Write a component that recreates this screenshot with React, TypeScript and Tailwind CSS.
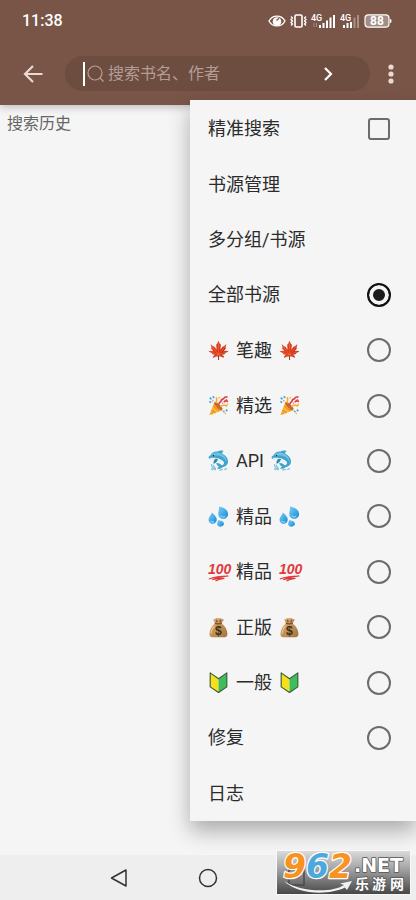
import { useState } from "react";
import type { ReactNode } from "react";

function Maple() {
  return (
    <svg viewBox="0 0 24 24" className="size-[21px]" aria-hidden="true">
      <defs>
        <linearGradient id="maple" x1="0" y1="0" x2="1" y2="1">
          <stop offset="0" stopColor="#ee5a30" />
          <stop offset=".5" stopColor="#d8361b" />
          <stop offset="1" stopColor="#b52d18" />
        </linearGradient>
      </defs>
      <path
        fill="url(#maple)"
        d="M12 .8l1.500 3.400 1.200 1-.5 5.800 2.300-3.200 1.700-.6 2.800-2.700-.9 3.900.2 1.600-2.500 2.800 3-.6 2.700.9-3.200 1.500-2 1.900-2.700.4 2.200 1.300.6 2.100-2.600-1-2.600-.7-.7.4.2 3.800h-1.200l-.1-3.800-.6-.4-2.700.7-2.700 1.200.8-2.300 2.100-1.300-2.600-.4-2-1.900L.5 13.100l2.700-.9 3 .6L3.700 10l.2-1.600L3 4.500l2.800 2.700 1.700.6L9.800 11l-.5-5.800 1.200-1z"
      />
      <path d="M12 4v13L4 6.500M12 17l8-10.500M12 17l-9-3.500M12 17l9-3.500M12 17l-4 2M12 17l4 2" stroke="#f58a4e" strokeWidth=".5" fill="none" />
      <path d="M12 17.500v5" stroke="#a33b17" strokeWidth="1" />
    </svg>
  );
}

function Party() {
  return (
    <svg viewBox="0 0 24 24" className="size-[21px]" aria-hidden="true">
      <path d="M1.500 23L7 8.500c3 .5 8.500 5.500 9.500 8.800z" fill="#f9b62c" />
      <path d="M4 17.500l4.500 3M6 12.500l7 5.500M3 20.500l2.500 1.300" stroke="#ec8a30" strokeWidth="1.400" />
      <ellipse cx="11.800" cy="12.700" rx="2.200" ry="6.200" transform="rotate(-46 11.800 12.700)" fill="#c96a2b" />
      <path d="M9 9c1-2 1.500-4 .5-6.500M14 13.500c2.500-2.500 4.500-2.500 8-1" fill="none" stroke="#f4a928" strokeWidth="1.800" />
      <path d="M12.500 11c-.5-3 2.500-2.500 2.500-4.500s3-1.500 3.300-3 2-1 4-1.500M18 8l3-2 1.500 2" fill="none" stroke="#e23d3d" strokeWidth="1.900" />
      <path d="M2 3l2 2M5.500 1.500L7 3.500M1.500 7.500l2.200 1M17 18.500l2 .6M20.500 16.500l1.500 2" stroke="#4ba6dc" strokeWidth="1.900" />
      <path d="M12 2.500l1.500 1M21.500 10l1 1.500M19 21.500l1.500-.8" stroke="#f7bd38" strokeWidth="1.900" />
      <path d="M5 6.200l1.200 1M16 9.700l1.300-.5" stroke="#ef7fa4" strokeWidth="1.700" />
    </svg>
  );
}

function Dolphin() {
  return (
    <svg viewBox="0 0 24 24" className="size-[21px]" aria-hidden="true">
      <path
        d="M.6 8.500c.2-1.300 1.300-1.600 2.100-2.200C4.200 2.800 7.500 1.500 11 1.800c1.800-1.200 4.200-1.500 7-.6-1.300.8-1.900 1.800-1.800 3 4.300 2 6.800 5.600 6.700 9.300-.1 3.200-2.300 5.500-6.400 6.100-1.500 1.600-3.600 2.300-6 1.600.3-1.100 1.200-1.700 2.200-2.100-1.800-.7-3-2-3.300-4.200 2.800-.1 4.700.7 6 2.600 2.300-.5 3.200-2 2.700-3.900-.8-1.800-3.300-2.300-6.100-2.500-3.500-.2-6.200.3-8.700-.5-1.300-.4-2.400-.8-2.700-2.100z"
        fill="#3fa3cc"
      />
      <path d="M3.500 6C6.500 1.800 13.500 2.200 17.300 5.800c3 2.700 4.300 5.500 3.700 8.200-1.700-5.500-7-8.700-14-7.400z" fill="#6fc4e4" />
      <path d="M1.800 8.800c3.500.3 6.700-.7 9.700.7 3.500 1.200 6.500 3.500 6.200 6-2-2.200-4.700-1.600-7.200-2.200-4 0-7-1-8.700-4.500z" fill="#e5f2f6" />
      <path d="M8.500 10c-1.800 1.300-2.500 3.300-2.200 5.800 2.500-.8 4.200-2.500 5.200-5.500z" fill="#2e89ae" />
      <circle cx="6.300" cy="6.400" r=".9" fill="#1d4050" />
      <path d="M4 16c0 4 2 6 5 6.700M6 17c.3 2 1.400 3.500 3 4.300M3.500 21.500l2 1.500M13 23l4-.8M18.500 22.500l3-1.500" stroke="#7cc3e2" strokeWidth="1.400" fill="none" />
    </svg>
  );
}

function Drops() {
  return (
    <svg viewBox="0 0 24 24" className="size-[21px]" aria-hidden="true">
      <defs>
        <linearGradient id="drop" x1="0" y1="0" x2="1" y2="1">
          <stop offset="0" stopColor="#79d0fa" />
          <stop offset="1" stopColor="#1588d0" />
        </linearGradient>
      </defs>
      <path d="M12.500.5c5.500.8 10.500 4 10.500 8.700 0 3.300-2.500 5.500-5.600 5.500-3.200 0-5.600-2.200-5.700-5.300-.1-3 1.300-5.700.8-8.900z" fill="url(#drop)" />
      <path d="M4.500 7.500c2.300 2.300 5.500 4.800 5.500 8.300 0 2.700-2 4.500-4.700 4.500S.6 18.500.6 15.800c0-3.200 3-5.200 3.900-8.300z" fill="url(#drop)" />
      <path d="M11.500 16c2.300.5 6.800 1.400 6.800 4.400 0 1.800-1.700 3.200-3.900 3.200s-4-1.200-4-3.400c0-1.600 1.400-2.500 1.100-4.200z" fill="url(#drop)" />
      <path d="M14.300 11.200c1.200 1.600 4 1.700 5.500.3M3 17.200c.9 1.400 2.800 1.600 4.200.6" stroke="#8adcff" strokeWidth="1.200" fill="none" />
    </svg>
  );
}

function Hundred() {
  return (
    <svg viewBox="0 0 21 21" className="size-[21px] overflow-visible" aria-hidden="true">
      <text x="0" y="13" fill="#e0393b" className="font-['Liberation_Sans_Narrow','Liberation_Sans'] text-[14px] font-bold italic">
        100
      </text>
      <path d="M.8 18C6 16 12 15 20 15c-5 .6-12 1.800-15.500 3.500 4-.8 7.500-1.300 11.500-1.200-3 .5-6.500 1.500-8.500 2.700" fill="none" stroke="#e0393b" strokeWidth="1.200" strokeLinejoin="round" />
    </svg>
  );
}

function MoneyBag() {
  return (
    <svg viewBox="0 0 24 24" className="size-[21px]" aria-hidden="true">
      <defs>
        <linearGradient id="bag" x1="0" y1="0" x2="1" y2="1">
          <stop offset="0" stopColor="#dfb075" />
          <stop offset="1" stopColor="#a3733f" />
        </linearGradient>
      </defs>
      <path d="M8 7.500L6 3.200C6.500 1.500 8.500 2.700 9 1.300c1.200-.8 2 .4 3 .2 1-.3 2.200-1 3 .2.800 1 2.800.2 3 1.700L15.500 7.500c4 2.500 6.500 7.300 6.700 11.500.1 3.500-2 4.200-5 4.200H6.500c-3 0-5-.8-4.800-4.200C1.900 14.500 4.200 10 8 7.500z" fill="url(#bag)" />
      <path d="M7.800 7c2.500 1 5.500 1 8 0M9.500 3.500l1 2.500M14.500 3.300L13.500 6" stroke="#7c4f24" strokeWidth="1.300" fill="none" />
      <path d="M3.500 19c.2-3.500 1.500-6.500 4-8.700" stroke="#ecc58c" strokeWidth="1.200" fill="none" />
      <text x="12" y="20.500" textAnchor="middle" fill="#3d3214" className="font-['Liberation_Sans'] text-[14px] font-bold">
        $
      </text>
    </svg>
  );
}

function Beginner() {
  return (
    <svg viewBox="0 0 24 24" className="size-[21px]" aria-hidden="true">
      <path d="M2.500 1.500L12 8v15.500L2.500 17z" fill="#f6e01c" />
      <path d="M21.500 1.500L12 8v15.500l9.500-6.500z" fill="#3fbd5c" />
      <path d="M2.500 1L12 7.800 21.500 1v16L12 23.500 2.500 17z" fill="none" stroke="#3c5a3b" strokeWidth="1.300" strokeLinejoin="round" />
    </svg>
  );
}

type Source = { id: string; text: string; icon?: ReactNode };

const sources: Source[] = [
  { id: "all", text: "全部书源" },
  { id: "biqu", text: "笔趣", icon: <Maple /> },
  { id: "picked", text: "精选", icon: <Party /> },
  { id: "api", text: "API", icon: <Dolphin /> },
  { id: "quality", text: "精品", icon: <Drops /> },
  { id: "quality-100", text: "精品", icon: <Hundred /> },
  { id: "official", text: "正版", icon: <MoneyBag /> },
  { id: "normal", text: "一般", icon: <Beginner /> },
  { id: "fix", text: "修复" },
];

function StatusBar() {
  return (
    <div className="flex h-[42px] items-center justify-between pr-6 pl-[22px] text-white">
      <span className="font-['Roboto'] text-base font-medium">11:38</span>
      <div className="flex items-center gap-1">
        <svg viewBox="0 0 18 14" className="h-[14px] w-[18px]" aria-hidden="true">
          <path d="M1 7c3.500-6.500 12.500-6.500 16 0-3.500 6.500-12.500 6.500-16 0z" fill="none" stroke="#fff" strokeWidth="1.400" />
          <circle cx="9" cy="7.500" r="4.300" fill="#fff" />
          <path d="M8.500 6.500l2.500-2.300" stroke="#795548" strokeWidth="1.300" fill="none" />
        </svg>
        <svg viewBox="0 0 17 14" className="h-[14px] w-[17px]" fill="none" stroke="#fff" aria-hidden="true">
          <rect x="5" y="1" width="7" height="12" rx="1.200" strokeWidth="1.600" />
          <path d="M1 2.500l1.500 1.500L1 5.500 2.500 7 1 8.500 2.500 10 1 11.500M16 2.500L14.500 4 16 5.500 14.500 7 16 8.500 14.500 10l1.500 1.500" strokeWidth="1.300" />
        </svg>
        <svg viewBox="0 0 25 14" className="h-[14px] w-[25px] overflow-visible" fill="#fff" aria-hidden="true">
          <text x="0" y="7" className="font-['Roboto'] text-[9px] font-medium">4G</text>
          <path d="M3 9v4M5.500 9v4" stroke="#a58c82" strokeWidth="1" />
          <path d="M8 11h2v3H8zM11.500 9h2v5h-2zM15 6.500h2V14h-2zM18.500 3.500h2V14h-2zM22 1h2v13h-2z" />
        </svg>
        <svg viewBox="0 0 20 14" className="h-[14px] w-5 overflow-visible" fill="#fff" aria-hidden="true">
          <text x="0" y="7" className="font-['Roboto'] text-[9px] font-medium">4G</text>
          <path d="M3 11h2v3H3zM6.500 9h2v5h-2zM10 8h2v6h-2z" />
          <path d="M13.500 3.500h2V14h-2zM17 1h2v13h-2z" opacity=".35" />
        </svg>
        <svg viewBox="0 0 28 14" className="h-[14px] w-7" aria-hidden="true">
          <rect x="1" y=".8" width="24" height="12.400" rx="3.500" fill="#a48d84" stroke="#fff" strokeWidth="1.200" />
          <path d="M26 5v4c1.200 0 1.500-.8 1.500-2S27.200 5 26 5z" fill="#fff" />
          <text x="13" y="11" textAnchor="middle" fill="#fff" className="font-['Roboto'] text-[12px] font-bold">88</text>
        </svg>
      </div>
    </div>
  );
}

function SearchBar() {
  return (
    <div className="flex h-[63px] items-center">
      <button type="button" aria-label="返回" className="flex w-[65px] justify-center text-[#ead9d4]">
        <svg viewBox="0 0 20 20" className="size-5" fill="none" stroke="currentColor" strokeWidth="2.200" aria-hidden="true">
          <path d="M19.500 10H2M10 2L2 10l8 8" />
        </svg>
      </button>
      <form className="flex h-[35px] flex-1 items-center rounded-full bg-[#6e4d41] pr-[34px] pl-[18px]">
        <span className="h-6 w-[2px] bg-white" />
        <svg viewBox="0 0 18 18" className="ml-[2px] size-[18px]" fill="none" stroke="#b39e96" strokeWidth="1.200" aria-hidden="true">
          <circle cx="8" cy="8" r="7" />
          <path d="M13 13l3.500 3.500" />
        </svg>
        <input
          type="text"
          aria-label="搜索书名、作者"
          placeholder="搜索书名、作者"
          className="ml-[3px] w-0 flex-1 bg-transparent text-base text-white outline-none placeholder:text-[#b39e96]"
        />
        <button type="button" aria-label="搜索" className="text-white">
          <svg viewBox="0 0 16 16" className="size-4" fill="none" stroke="currentColor" strokeWidth="2.200" aria-hidden="true">
            <path d="M5 2l6 6-6 6" />
          </svg>
        </button>
      </form>
      <button type="button" aria-label="更多" className="flex w-[46px] justify-center pr-[5px] text-[#ead9d4]">
        <svg viewBox="0 0 6 20" className="h-5 w-[6px]" fill="currentColor" aria-hidden="true">
          <circle cx="3" cy="3" r="2.600" />
          <circle cx="3" cy="10" r="2.600" />
          <circle cx="3" cy="17" r="2.600" />
        </svg>
      </button>
    </div>
  );
}

function Menu() {
  const [exact, setExact] = useState(false);
  const [source, setSource] = useState("all");

  return (
    <div className="absolute top-[100px] right-0 grid min-h-[721px] w-[226px] auto-rows-fr bg-[#f5f5f5] pt-px pr-[25px] pl-[18px] text-[18px] text-[#2b2b2b] shadow-[0_10px_20px_rgba(0,0,0,0.3)]">
      <label className="flex items-center justify-between">
        精准搜索
        <input
          type="checkbox"
          checked={exact}
          onChange={(e) => setExact(e.target.checked)}
          className="m-px size-[22px] appearance-none rounded-[3px] border-2 border-[#6c6c6c] checked:bg-[#6c6c6c]"
        />
      </label>
      <button type="button" className="text-left">书源管理</button>
      <button type="button" className="text-left">多分组/书源</button>
      {sources.map((item) => (
        <label key={item.id} className="flex items-center justify-between">
          <span className="flex items-center gap-[7px]">
            {item.icon}
            <span>{item.text}</span>
            {item.icon}
          </span>
          <input
            type="radio"
            name="source"
            checked={source === item.id}
            onChange={() => setSource(item.id)}
            className="size-6 appearance-none rounded-full border-2 border-[#6c6c6c] checked:border-[#111] checked:bg-[#1c1c1c] checked:shadow-[inset_0_0_0_4px_#f5f5f5]"
          />
        </label>
      ))}
      <button type="button" className="text-left">日志</button>
    </div>
  );
}

function NavBar() {
  return (
    <nav className="flex h-[45px] items-center justify-center gap-[69px] bg-[#eee] text-[#333]">
      <button type="button" aria-label="后退">
        <svg viewBox="0 0 20 20" className="size-5" fill="none" stroke="currentColor" strokeWidth="1.500" strokeLinejoin="round" aria-hidden="true">
          <path d="M17 2v16L2.500 10z" />
        </svg>
      </button>
      <button type="button" aria-label="主页">
        <svg viewBox="0 0 20 20" className="size-5" fill="none" stroke="currentColor" strokeWidth="1.500" aria-hidden="true">
          <circle cx="10" cy="10" r="8.500" />
        </svg>
      </button>
      <button type="button" aria-label="最近任务">
        <svg viewBox="0 0 20 20" className="size-5" fill="none" stroke="currentColor" strokeWidth="1.500" aria-hidden="true">
          <rect x="3" y="2" width="15" height="15" />
        </svg>
      </button>
    </nav>
  );
}

function SiteBadge() {
  return (
    <svg viewBox="0 0 135 45" className="absolute right-[5px] bottom-[5px] h-[45px] w-[135px] overflow-visible" role="img" aria-label="962.NET 乐游网">
      <defs>
        <linearGradient id="badge" x1="0" y1="0" x2="0" y2="1">
          <stop offset="0" stopColor="#dcdcdc" />
          <stop offset=".4" stopColor="#a6a6a6" />
          <stop offset="1" stopColor="#454545" />
        </linearGradient>
      </defs>
      <rect x=".5" y=".5" width="134" height="44" fill="url(#badge)" stroke="#f8f8f8" />
      <rect x="13" y="20" width="15" height="15" fill="none" stroke="#4a4a4a" strokeWidth="1.500" />
      <path d="M8 31c14 10 46 13 60 4l-4-1.500L76 31l-5 9-2-2.500C52 46 20 44 8 31z" fill="#f1f1f1" />
      <text x="7" y="28" stroke="#fff" strokeWidth="2.500" strokeLinejoin="round" paintOrder="stroke" className="font-['DejaVu_Sans'] text-[33px] font-bold italic">
        <tspan fill="#f7931e">9</tspan>
        <tspan fill="#4da8dd">6</tspan>
        <tspan fill="#f7931e">2</tspan>
      </text>
      <g fill="#fff" stroke="#555" strokeWidth="1.600" strokeLinejoin="round" paintOrder="stroke">
        <text x="78" y="22" className="font-['DejaVu_Sans'] text-[19px] font-bold">.NET</text>
        <g className="font-['Noto_Sans_CJK_SC'] text-[14px] font-bold">
          <text x="79" y="39">乐</text>
          <text x="96" y="39">游</text>
          <text x="114" y="39">网</text>
        </g>
      </g>
    </svg>
  );
}

export default function App() {
  return (
    <div className="relative flex min-h-screen flex-col bg-[#f5f5f5] font-['Roboto','Noto_Sans_CJK_SC',sans-serif]">
      <header className="bg-[#795548] shadow-[0_2px_8px_rgba(0,0,0,0.25)]">
        <StatusBar />
        <SearchBar />
      </header>
      <main className="flex-1 px-[7px] pt-[7px]">
        <h1 className="text-base text-[#666]">搜索历史</h1>
      </main>
      <NavBar />
      <Menu />
      <SiteBadge />
    </div>
  );
}
